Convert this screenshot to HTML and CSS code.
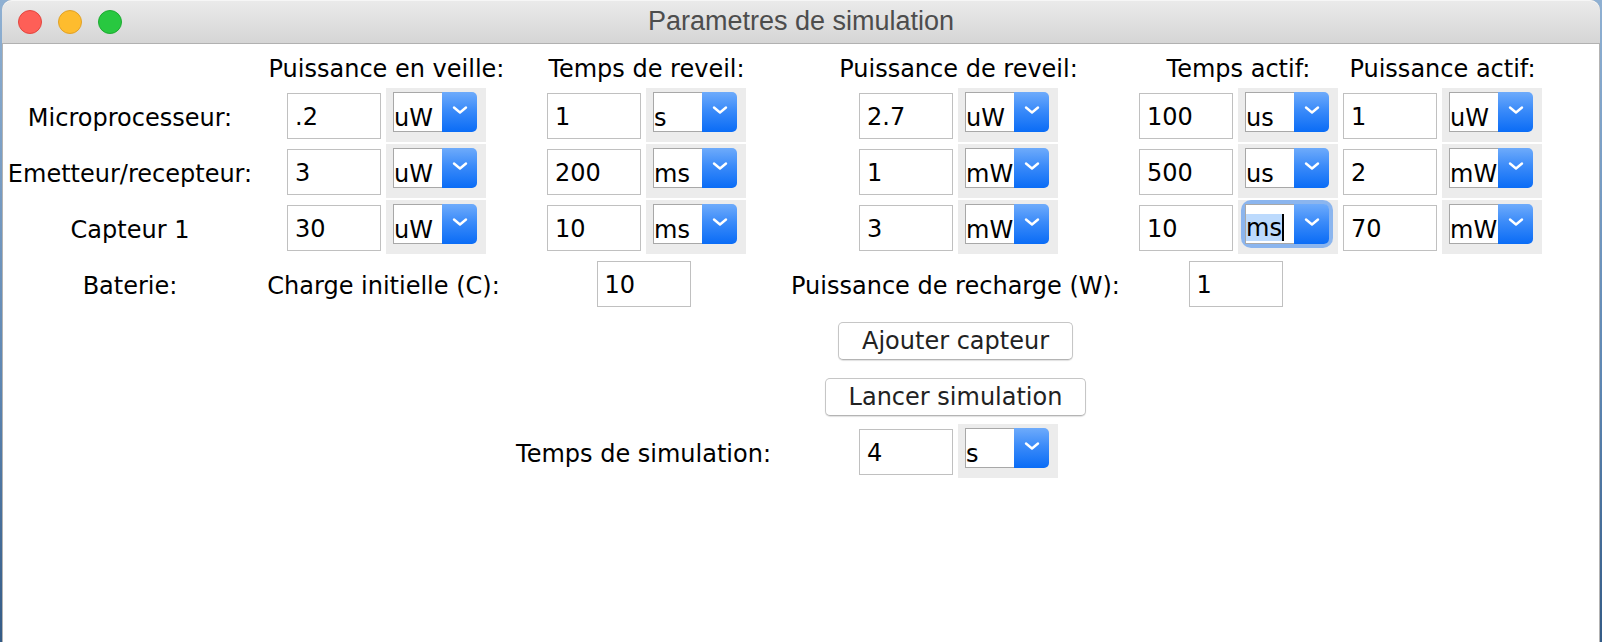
FILE: index.html
```html
<!DOCTYPE html>
<html lang="fr">
<head>
<meta charset="utf-8">
<title>Parametres de simulation</title>
<link rel="stylesheet" href="styles.css">
</head>
<body>
<div class="window">
  <div class="titlebar">
    <div class="lights">
      <span class="light red"></span>
      <span class="light yellow"></span>
      <span class="light green"></span>
    </div>
    <div class="title">Parametres de simulation</div>
    <div class="spacer"></div>
  </div>
  <div class="content">
    <div class="grid">
      <!-- header -->
      <div class="head p1">Puissance en veille:</div>
      <div class="head p2">Temps de reveil:</div>
      <div class="head p3">Puissance de reveil:</div>
      <div class="head p4">Temps actif:</div>
      <div class="head p5">Puissance actif:</div>

      <!-- row 1 -->
      <div class="label lab">Microprocesseur:</div>
      <div class="pair p1"><div class="field">.2</div><div class="combo-bg"><div class="combo"><div class="combo-val">uW</div><div class="combo-btn"><svg width="16" height="10" viewBox="0 0 16 10"><path d="M2 2.5 L8 7.5 L14 2.5" /></svg></div></div></div></div>
      <div class="pair p2"><div class="field">1</div><div class="combo-bg"><div class="combo"><div class="combo-val">s</div><div class="combo-btn"><svg width="16" height="10" viewBox="0 0 16 10"><path d="M2 2.5 L8 7.5 L14 2.5" /></svg></div></div></div></div>
      <div class="pair p3"><div class="field">2.7</div><div class="combo-bg"><div class="combo"><div class="combo-val">uW</div><div class="combo-btn"><svg width="16" height="10" viewBox="0 0 16 10"><path d="M2 2.5 L8 7.5 L14 2.5" /></svg></div></div></div></div>
      <div class="pair p4"><div class="field">100</div><div class="combo-bg"><div class="combo"><div class="combo-val">us</div><div class="combo-btn"><svg width="16" height="10" viewBox="0 0 16 10"><path d="M2 2.5 L8 7.5 L14 2.5" /></svg></div></div></div></div>
      <div class="pair p5"><div class="field">1</div><div class="combo-bg"><div class="combo"><div class="combo-val">uW</div><div class="combo-btn"><svg width="16" height="10" viewBox="0 0 16 10"><path d="M2 2.5 L8 7.5 L14 2.5" /></svg></div></div></div></div>

      <!-- row 2 -->
      <div class="label lab">Emetteur/recepteur:</div>
      <div class="pair p1"><div class="field">3</div><div class="combo-bg"><div class="combo"><div class="combo-val">uW</div><div class="combo-btn"><svg width="16" height="10" viewBox="0 0 16 10"><path d="M2 2.5 L8 7.5 L14 2.5" /></svg></div></div></div></div>
      <div class="pair p2"><div class="field">200</div><div class="combo-bg"><div class="combo"><div class="combo-val">ms</div><div class="combo-btn"><svg width="16" height="10" viewBox="0 0 16 10"><path d="M2 2.5 L8 7.5 L14 2.5" /></svg></div></div></div></div>
      <div class="pair p3"><div class="field">1</div><div class="combo-bg"><div class="combo"><div class="combo-val">mW</div><div class="combo-btn"><svg width="16" height="10" viewBox="0 0 16 10"><path d="M2 2.5 L8 7.5 L14 2.5" /></svg></div></div></div></div>
      <div class="pair p4"><div class="field">500</div><div class="combo-bg"><div class="combo"><div class="combo-val">us</div><div class="combo-btn"><svg width="16" height="10" viewBox="0 0 16 10"><path d="M2 2.5 L8 7.5 L14 2.5" /></svg></div></div></div></div>
      <div class="pair p5"><div class="field">2</div><div class="combo-bg"><div class="combo"><div class="combo-val">mW</div><div class="combo-btn"><svg width="16" height="10" viewBox="0 0 16 10"><path d="M2 2.5 L8 7.5 L14 2.5" /></svg></div></div></div></div>

      <!-- row 3 -->
      <div class="label lab">Capteur 1</div>
      <div class="pair p1"><div class="field">30</div><div class="combo-bg"><div class="combo"><div class="combo-val">uW</div><div class="combo-btn"><svg width="16" height="10" viewBox="0 0 16 10"><path d="M2 2.5 L8 7.5 L14 2.5" /></svg></div></div></div></div>
      <div class="pair p2"><div class="field">10</div><div class="combo-bg"><div class="combo"><div class="combo-val">ms</div><div class="combo-btn"><svg width="16" height="10" viewBox="0 0 16 10"><path d="M2 2.5 L8 7.5 L14 2.5" /></svg></div></div></div></div>
      <div class="pair p3"><div class="field">3</div><div class="combo-bg"><div class="combo"><div class="combo-val">mW</div><div class="combo-btn"><svg width="16" height="10" viewBox="0 0 16 10"><path d="M2 2.5 L8 7.5 L14 2.5" /></svg></div></div></div></div>
      <div class="pair p4"><div class="field">10</div><div class="combo-bg"><div class="combo focused"><div class="combo-val"><span class="sel">ms</span></div><div class="combo-btn"><svg width="16" height="10" viewBox="0 0 16 10"><path d="M2 2.5 L8 7.5 L14 2.5" /></svg></div></div></div></div>
      <div class="pair p5"><div class="field">70</div><div class="combo-bg"><div class="combo"><div class="combo-val">mW</div><div class="combo-btn"><svg width="16" height="10" viewBox="0 0 16 10"><path d="M2 2.5 L8 7.5 L14 2.5" /></svg></div></div></div></div>

      <!-- row 4 : battery -->
      <div class="label lab">Baterie:</div>
      <div class="label p1 centered">Charge initielle (C):</div>
      <div class="solo p2 centered"><div class="field">10</div></div>
      <div class="label p3 centered">Puissance de recharge (W):</div>
      <div class="solo p4 centered"><div class="field">1</div></div>

      <!-- buttons -->
      <div class="btn-cell p3 centered"><button class="btn">Ajouter capteur</button></div>
      <div class="btn-cell p3 centered"><button class="btn">Lancer simulation</button></div>

      <!-- simulation time -->
      <div class="label p2 centered">Temps de simulation:</div>
      <div class="pair p3"><div class="field">4</div><div class="combo-bg"><div class="combo"><div class="combo-val">s</div><div class="combo-btn"><svg width="16" height="10" viewBox="0 0 16 10"><path d="M2 2.5 L8 7.5 L14 2.5" /></svg></div></div></div></div>
    </div>
  </div>
</div>
</body>
</html>
```

FILE: styles.css
```css
html, body {
  margin: 0;
  padding: 0;
}

body {
  width: 1602px;
  height: 642px;
  overflow: hidden;
  background: linear-gradient(to bottom, #8fb0d2 0%, #5d86b2 60%, #345b86 100%);
  font-family: "DejaVu Sans", sans-serif;
  font-size: 24px;
  color: #000;
}

.window {
  margin-left: 2px;
  width: 1598px;
  height: 642px;
  background: #fff;
  border-radius: 10px 10px 0 0;
  overflow: hidden;
  box-shadow: inset 1px 0 0 #b3b3b3, inset -1px 0 0 #b3b3b3;
}

/* ---------- title bar ---------- */
.titlebar {
  height: 43px;
  border-bottom: 1px solid #b1b1b1;
  background: linear-gradient(to bottom, #ebebeb, #d5d5d5);
  display: grid;
  grid-template-columns: 1fr auto 1fr;
  align-items: center;
  border-radius: 10px 10px 0 0;
  box-shadow: inset 0 1px 0 #f6f6f6;
}

.lights {
  display: flex;
  gap: 16px;
  padding-left: 16px;
}

.light {
  width: 24px;
  height: 24px;
  border-radius: 50%;
  box-sizing: border-box;
}

.red { background: #fe5f57; border: 1px solid #e2463f; }
.yellow { background: #febc2e; border: 1px solid #e0a127; }
.green { background: #28c840; border: 1px solid #1eaa31; }

.title {
  font-family: "Liberation Sans", Arial, sans-serif;
  font-size: 27px;
  color: #4d4d4d;
  white-space: nowrap;
  padding-bottom: 1px;
}

/* ---------- content grid ---------- */
.content {
  padding-top: 11px;
}

.grid {
  display: grid;
  grid-template-columns: 256px 29px 199px 61px 199px 113px 199px 81px 199px 5px 199px;
  grid-template-rows: 31px repeat(7, 54px);
  row-gap: 2px;
}

.lab { grid-column: 1; }
.p1 { grid-column: 3; }
.p2 { grid-column: 5; }
.p3 { grid-column: 7; }
.p4 { grid-column: 9; }
.p5 { grid-column: 11; }

.head {
  display: flex;
  justify-content: center;
  white-space: nowrap;
  line-height: 28px;
}

.label {
  display: flex;
  justify-content: center;
  white-space: nowrap;
  line-height: 28px;
  padding-top: 16px;
}

.centered {
  padding-right: 6px;
}

.solo {
  display: flex;
  justify-content: center;
}

/* ---------- fields ---------- */
.pair {
  display: flex;
  gap: 5px;
  height: 54px;
}

.field {
  width: 94px;
  height: 46px;
  margin-top: 5px;
  box-sizing: border-box;
  border: 1px solid #c0c0c0;
  background: #fff;
  padding: 3px 0 0 7px;
  line-height: 41px;
  white-space: nowrap;
  overflow: hidden;
}

.combo-bg {
  width: 100px;
  height: 54px;
  box-sizing: border-box;
  background: #ececec;
  padding: 4px 0 0 7px;
}

.combo {
  width: 84px;
  height: 40px;
  display: flex;
  border-radius: 2px 5px 5px 2px;
}

.combo.focused {
  box-shadow: 0 0 0 4px rgba(98, 158, 240, 0.7);
  border-radius: 6px;
}

.combo-val {
  width: 49px;
  box-sizing: border-box;
  border: 1px solid #a8a8a8;
  border-right: 0;
  background: #fff;
  padding-top: 11px;
  line-height: 28px;
  white-space: nowrap;
  overflow: hidden;
}

.sel {
  display: inline-block;
  background: #bcdafd;
  line-height: 26px;
  padding-top: 1px;
  border-right: 2px solid #000;
  margin-top: -2px;
  vertical-align: top;
}

.combo-btn {
  width: 35px;
  border-radius: 0 5px 5px 0;
  background: linear-gradient(to bottom, #6eabfb 0%, #3b8bf9 45%, #0a6cf6 100%);
  display: flex;
  align-items: center;
  justify-content: center;
  padding-bottom: 4px;
  box-sizing: border-box;
}

.combo-btn svg path {
  fill: none;
  stroke: #fff;
  stroke-width: 2.4;
  stroke-linecap: round;
  stroke-linejoin: round;
}

/* ---------- buttons ---------- */
.btn-cell {
  display: flex;
  justify-content: center;
  align-items: flex-start;
}

.btn {
  margin-top: 10px;
  height: 38px;
  padding: 0 23px;
  font-family: "DejaVu Sans", sans-serif;
  font-size: 24px;
  line-height: 36px;
  color: #222;
  background: #fff;
  border: 1px solid #c6c6c6;
  border-bottom-color: #b4b4b4;
  border-radius: 5px;
  box-shadow: 0 1px 1px rgba(0, 0, 0, 0.12);
  white-space: nowrap;
}
```
